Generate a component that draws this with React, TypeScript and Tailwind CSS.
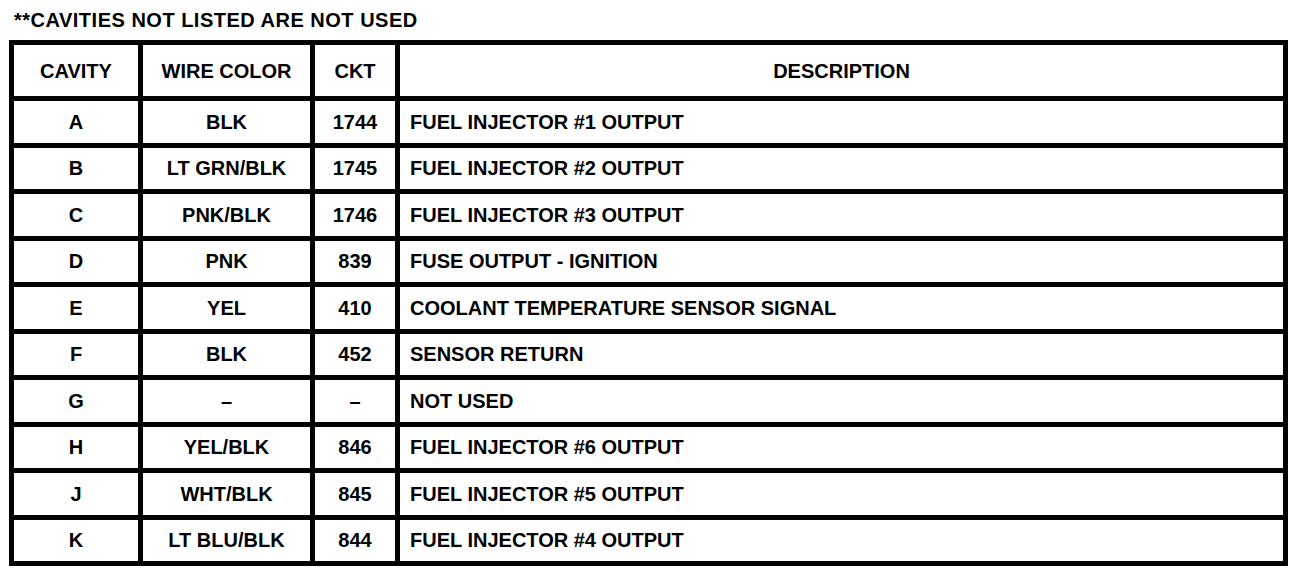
type Row = {
  cavity: string;
  wire: string;
  ckt: string;
  desc: string;
};

const rows: Row[] = [
  { cavity: "A", wire: "BLK", ckt: "1744", desc: "FUEL INJECTOR #1 OUTPUT" },
  { cavity: "B", wire: "LT GRN/BLK", ckt: "1745", desc: "FUEL INJECTOR #2 OUTPUT" },
  { cavity: "C", wire: "PNK/BLK", ckt: "1746", desc: "FUEL INJECTOR #3 OUTPUT" },
  { cavity: "D", wire: "PNK", ckt: "839", desc: "FUSE OUTPUT - IGNITION" },
  { cavity: "E", wire: "YEL", ckt: "410", desc: "COOLANT TEMPERATURE SENSOR SIGNAL" },
  { cavity: "F", wire: "BLK", ckt: "452", desc: "SENSOR RETURN" },
  { cavity: "G", wire: "–", ckt: "–", desc: "NOT USED" },
  { cavity: "H", wire: "YEL/BLK", ckt: "846", desc: "FUEL INJECTOR #6 OUTPUT" },
  { cavity: "J", wire: "WHT/BLK", ckt: "845", desc: "FUEL INJECTOR #5 OUTPUT" },
  { cavity: "K", wire: "LT BLU/BLK", ckt: "844", desc: "FUEL INJECTOR #4 OUTPUT" },
];

const cell = "flex items-center bg-white";

function App() {
  return (
    <div className="h-[572px] w-[1312px] bg-white font-['Liberation_Sans',Arial,sans-serif] font-bold text-black">
      <div className="pl-[14px] pt-[8px] text-[20px] leading-[25px] tracking-[0.5px]">
        **CAVITIES NOT LISTED ARE NOT USED
      </div>

      <div className="ml-[9px] mt-[7px] grid w-[1279px] grid-cols-[124px_167px_80px_1fr] gap-[5px] bg-black p-[5px] text-[20px] leading-none">
        <div className={`${cell} h-[51px] justify-center`}>CAVITY</div>
        <div className={`${cell} h-[51px] justify-center`}>WIRE COLOR</div>
        <div className={`${cell} h-[51px] justify-center`}>CKT</div>
        <div className={`${cell} h-[51px] justify-center`}>DESCRIPTION</div>

        {rows.map((r) => (
          <div key={r.cavity} className="contents">
            <div className={`${cell} h-[41.5px] justify-center`}>{r.cavity}</div>
            <div className={`${cell} h-[41.5px] justify-center`}>{r.wire}</div>
            <div className={`${cell} h-[41.5px] justify-center`}>{r.ckt}</div>
            <div className={`${cell} h-[41.5px] pl-[10px]`}>{r.desc}</div>
          </div>
        ))}
      </div>
    </div>
  );
}

export default App;
